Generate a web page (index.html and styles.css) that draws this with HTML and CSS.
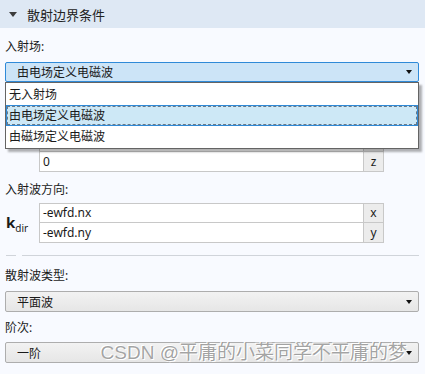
FILE: index.html
```html
<!DOCTYPE html>
<html lang="zh">
<head>
  <meta charset="UTF-8">
  <title>散射边界条件</title>
  <link rel="stylesheet" href="styles.css">
</head>
<body>
  <div class="section-header">
    <span class="caret"></span>
    <span class="section-title">散射边界条件</span>
  </div>

  <div class="panel">
    <div class="label first">入射场:</div>
    <div class="select-wrap">
      <div class="select active">
        <span>由电场定义电磁波</span>
        <span class="arrow"></span>
      </div>
      <ul class="dropdown">
        <li>无入射场</li>
        <li class="current">由电场定义电磁波</li>
        <li>由磁场定义电磁波</li>
      </ul>
    </div>

    <div class="label sub">电场:</div>
    <div class="vec">
      <div class="vec-sym top">E<sub>0</sub></div>
      <div class="vec-rows">
        <div class="row"><span class="val">0</span><span class="unit">x</span><span class="si">V/m</span></div>
        <div class="row"><span class="val">0</span><span class="unit">y</span><span class="si"></span></div>
        <div class="row"><span class="val">0</span><span class="unit">z</span><span class="si"></span></div>
      </div>
    </div>

    <div class="label dir">入射波方向:</div>
    <div class="vec">
      <div class="vec-sym"><b>k</b><sub>dir</sub></div>
      <div class="vec-rows">
        <div class="row"><span class="val">-ewfd.nx</span><span class="unit">x</span><span class="si"></span></div>
        <div class="row"><span class="val">-ewfd.ny</span><span class="unit">y</span><span class="si"></span></div>
      </div>
    </div>

    <div class="divider"><span class="stub"></span><span class="line"></span></div>

    <div class="label after-divider">散射波类型:</div>
    <div class="select">
      <span>平面波</span>
      <span class="arrow"></span>
    </div>

    <div class="label order">阶次:</div>
    <div class="select-wrap">
      <div class="select">
        <span>一阶</span>
        <span class="arrow"></span>
      </div>
      <div class="watermark">CSDN @平庸的小菜同学不平庸的梦</div>
    </div>
  </div>
</body>
</html>
```

FILE: styles.css
```css
body {
  margin: 0;
  background: #f8faff;
  font-family: "Noto Sans", "Noto Sans CJK SC", sans-serif;
  font-size: 12px;
  color: #1a1a1a;
  width: 425px;
  height: 374px;
  overflow: hidden;
}

.section-header {
  height: 28px;
  background: #dee8f4;
  display: flex;
  align-items: center;
  padding-left: 9px;
}

.caret {
  width: 0;
  height: 0;
  border-left: 4px solid transparent;
  border-right: 4px solid transparent;
  border-top: 5px solid #3c3c3c;
  margin-right: 10px;
}

.section-title {
  font-size: 13px;
  color: #222;
}

.panel {
  padding: 0 6px 0 5px;
}

.label {
  height: 20px;
  line-height: 20px;
}

.label.first {
  margin-top: 9px;
  margin-bottom: 5px;
}

.label.sub {
  margin-top: 6px;
  margin-bottom: 4px;
}

.label.dir {
  margin-top: 8px;
  margin-bottom: 3px;
}

.label.after-divider {
  margin-top: 10px;
  margin-bottom: 5px;
}

.label.order {
  margin-top: 6px;
  margin-bottom: 4px;
}

.select-wrap {
  position: relative;
}

.select {
  height: 21px;
  box-sizing: border-box;
  border: 1px solid #adadad;
  border-radius: 2px;
  background: linear-gradient(#f2f2f2, #e6e6e6);
  display: flex;
  align-items: center;
  justify-content: space-between;
  padding: 0 6px 0 11px;
}

.select.active {
  height: 20px;
  background: #cce4f7;
  border-color: #2f8ad8;
}

.arrow {
  width: 0;
  height: 0;
  border-left: 3.5px solid transparent;
  border-right: 3.5px solid transparent;
  border-top: 4px solid #111;
}

.dropdown {
  position: absolute;
  left: 0;
  right: 0;
  top: 20px;
  margin: 0;
  padding: 1px 0;
  list-style: none;
  background: #fff;
  border: 1px solid #646464;
  box-shadow: 3px 3px 2px rgba(0, 0, 0, 0.3);
  z-index: 2;
}

.dropdown li {
  height: 21px;
  line-height: 21px;
  padding-left: 3px;
  box-sizing: border-box;
}

.dropdown li.current {
  background: #cde8f6;
  border: 1px solid #2f8ad8;
  outline: 1px dashed #6a7a88;
  outline-offset: -2px;
  line-height: 19px;
  padding-left: 2px;
}

.vec {
  display: flex;
  align-items: center;
}

.vec-sym {
  width: 34px;
  padding-left: 1px;
  box-sizing: border-box;
  font-size: 13px;
}

.vec-sym.top {
  align-self: flex-start;
}

.vec-sym b {
  font-size: 15px;
}

.vec-sym sub {
  font-size: 10px;
}

.vec-rows {
  flex: 1;
}

.row {
  display: flex;
  height: 20px;
}

.val {
  width: 325px;
  box-sizing: border-box;
  border: 1px solid #c8c8c8;
  border-top: none;
  background: #fff;
  padding-left: 3px;
  line-height: 19px;
}

.row:first-child .val,
.row:first-child .unit {
  border-top: 1px solid #c8c8c8;
  line-height: 18px;
}

.unit {
  width: 20px;
  box-sizing: border-box;
  border: 1px solid #c8c8c8;
  border-left: none;
  border-top: none;
  background: #ececec;
  text-align: center;
  line-height: 19px;
}

.si {
  padding-left: 8px;
  font-size: 11px;
}

.divider {
  display: flex;
  align-items: center;
  margin-top: 12px;
  gap: 6px;
  height: 1px;
}

.divider .stub {
  width: 10px;
  height: 1px;
  background: #d0d4da;
  margin-left: 1px;
}

.divider .line {
  flex: 1;
  height: 1px;
  background: #d0d4da;
}

.watermark {
  position: absolute;
  right: 12px;
  top: 0;
  line-height: 21px;
  font-family: "Liberation Sans", "Noto Sans CJK SC", sans-serif;
  font-size: 19px;
  color: rgba(125, 125, 125, 0.7);
  text-shadow: 1px 1px 0 #fff, -1px -1px 0 #fff;
  white-space: nowrap;
  pointer-events: none;
}
```
